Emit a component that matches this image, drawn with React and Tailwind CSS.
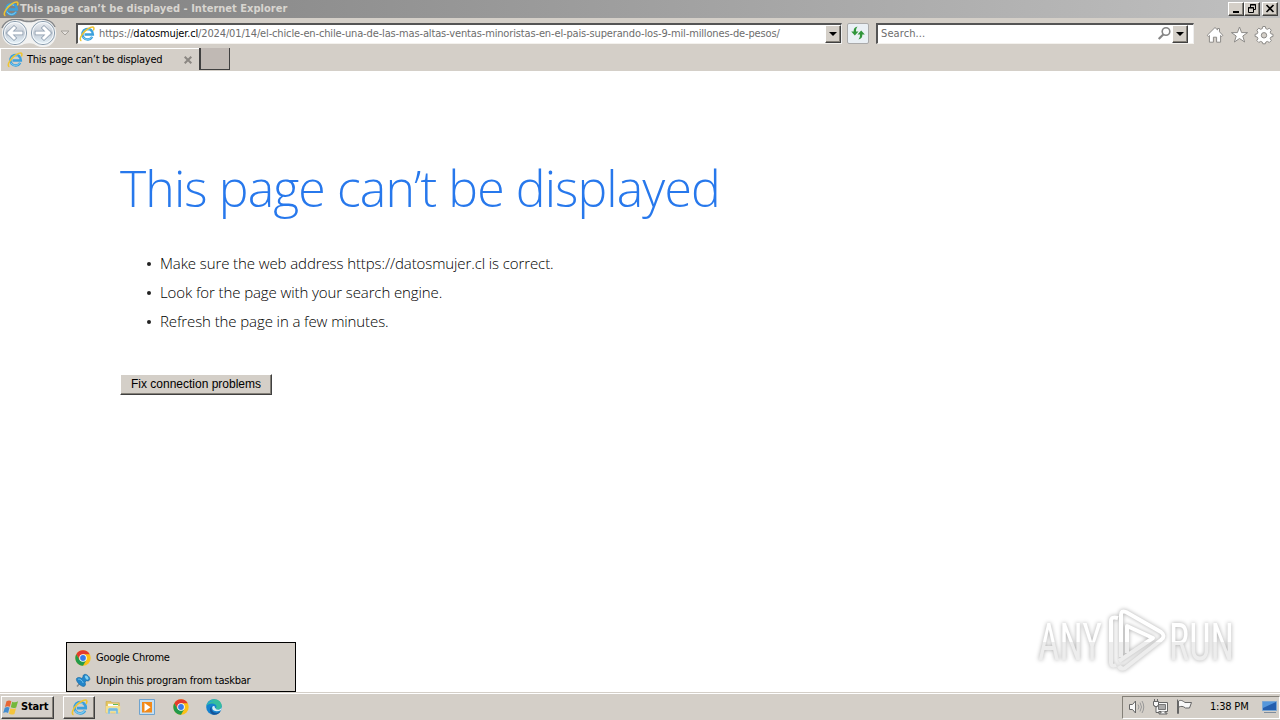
import { useState } from "react";
import clsx from "clsx";

const HOST = "datosmujer.cl";
const PATH =
  "/2024/01/14/el-chicle-en-chile-una-de-las-mas-altas-ventas-minoristas-en-el-pais-superando-los-9-mil-millones-de-pesos/";

const UI_FONT = "font-['DejaVu_Sans_Condensed','DejaVu_Sans',sans-serif] font-stretch-condensed";
const RAISED =
  "bg-[#d4cfc8] border border-t-white border-l-white border-r-[#404040] border-b-[#404040] shadow-[inset_-1px_-1px_0_#848078]";

/* ---------- Icons ---------- */

function IeIcon({ size = 16 }) {
  return (
    <svg width={size} height={size} viewBox="0 0 16 16" className="shrink-0" fill="none">
      <path d="M13.2 10.9A5.3 5.3 0 1 1 13.9 8.6H5.5" stroke="#3ba0dc" strokeWidth="2.5" />
      <path d="M12.9 10.6A4.9 4.9 0 0 1 4 10.8M4.5 6A4.8 4.8 0 0 1 11 4.4" stroke="#7fcdf3" strokeWidth="1" />
      <path
        d="M2.4 14.8C-.2 14 2 8.7 6 5.1 9.8 1.5 14.1-.1 14.8 1.7c.3.8 0 1.8-.5 2.8"
        stroke="#efc42f"
        strokeWidth="1.5"
      />
    </svg>
  );
}

function ChromeIcon() {
  return (
    <svg width="16" height="16" viewBox="0 0 16 16" className="shrink-0">
      <circle cx="8" cy="8" r="7.7" fill="#fbc116" />
      <path d="M1.3 4.2A7.7 7.7 0 0 1 14.7 4.2H8L4.7 9.9Z" fill="#e33b2e" />
      <path d="M1.3 4.2A7.7 7.7 0 0 0 8 15.7L11.3 9.9H4.7Z" fill="#229a4b" />
      <circle cx="8" cy="8" r="3.8" fill="#fff" />
      <circle cx="8" cy="8" r="2.9" fill="#397be8" />
    </svg>
  );
}

function PinIcon() {
  return (
    <svg width="16" height="16" viewBox="0 0 16 16" className="shrink-0">
      <path d="M2 13.5 6 9" stroke="#888" strokeWidth="1.5" />
      <path d="M1.5 5.5C2.8 4 5 4.2 6.6 5.3L8 4.3C7.5 1.7 9.9.5 12.1 2c2.6 1.7 3.5 4.3 2 5.5-.8.7-1.8.5-2.5.2L10 9.2c1 2.3.5 3.6-1 4.2C6 14 .4 8.2 1.5 5.5Z" fill="#2386c9" stroke="#13659f" strokeWidth=".6" />
      <ellipse cx="11.7" cy="4.6" rx="1.4" ry="2.3" transform="rotate(-40 11.7 4.6)" fill="#80d2f5" />
      <path d="M3.2 6.2c1.8-.6 4.4 1.7 5 3.8" stroke="#71c5ef" fill="none" />
    </svg>
  );
}

function ExplorerIcon() {
  return (
    <svg width="16" height="16" viewBox="0 0 16 16">
      <path d="M1 2.5h5l1 1.3h7.3v10H1Z" fill="#e6c760" stroke="#c8a84b" strokeWidth=".6" />
      <path d="M3 4.8h10v3H3Z" fill="#f8fcff" />
      <path d="M8 5.5h5" stroke="#64b75b" />
      <path d="M.8 7h14.4v6.8H.8Z" fill="#f6df89" />
      <path d="M3 15v-4.5q0-1.5 1.5-1.5h7q1.5 0 1.5 1.5V15h-2v-3H5v3Z" fill="#75b9dc" stroke="#b8dfef" strokeWidth=".5" />
    </svg>
  );
}

function MediaIcon() {
  return (
    <svg width="18" height="18" viewBox="0 0 18 18">
      <path d="M1.5 1.5h15v15h-15Z" fill="#c5dff3" stroke="#6fa3ce" />
      <path d="M4 4h10v10.5H4Z" fill="#f28a1a" />
      <path d="m6.5 5 6 4.2-6 4.2Z" fill="#fff" />
    </svg>
  );
}

function EdgeIcon() {
  return (
    <svg width="16" height="16" viewBox="0 0 16 16">
      <circle cx="8" cy="8" r="7.8" fill="#1582cf" />
      <path d="M.4 7C1.2 2.7 4.5.2 8.4.2c4.2 0 7.3 3 7.3 6.6 0 2.3-1.5 3.9-3.6 3.9-1.5 0-2.4-.6-2.4-1.2 0-.5.8-.7.8-1.9C10.5 5.8 8.6 4.4 6 4.4 3.6 4.4 1.4 5.4.4 7Z" fill="#35bd9e" />
      <path d="M.4 7C1.3 2.6 5 1 8 2.2 4.5 2 1.7 4 .4 7Z" fill="#259ee2" />
      <path d="M6 7c-1.6 2.6.2 6.3 3.4 6.8 1.9.4 3.9-.4 5.3-2-1 2.7-3.8 4.2-6.7 4C3.8 15.5 2.5 9 6 7Z" fill="#135399" />
      <path d="M9.7 9.5c-1.5-1-.5-2.4-1.7-2.6C6.7 6.7 6 8 6.3 9.4c.5 2.8 5 3.8 9 1.6L15.7 8c-.8 2-2 2.7-3.6 2.7-1.2 0-2-.4-2.4-1.2Z" fill="#d9edf3" />
    </svg>
  );
}

function WindowsFlag() {
  return (
    <svg width="18" height="17" viewBox="1 0 16 16" className="shrink-0">
      <path d="M3.8 2.2c1.7-1 3.2-.9 4.6-.2L7 7.3c-1.6-.8-3-.8-4.6.2Z" fill="#e76734" />
      <path d="M9.2 2.5c1.6.8 3.5.7 5.5-.3L13 8c-1.9.8-3.6.7-5.2-.2Z" fill="#74b83c" />
      <path d="M2.2 8.2c1.5-.9 3-.9 4.5-.1l-1.4 5.1c-1.5-.9-3-.8-4.6 0Z" fill="#438dcf" />
      <path d="M7.5 8.6c1.6.8 3.4.8 5.3.1L11.3 14c-2 .9-3.7.7-5.2-.2Z" fill="#f5c53c" />
    </svg>
  );
}

function NavArrows() {
  return (
    <svg width="58" height="28" viewBox="0 0 58 28" className="shrink-0">
      <defs>
        <linearGradient id="orb" x1="0" y1="0" x2="0" y2="1">
          <stop offset="0" stopColor="#eef0f3" />
          <stop offset=".5" stopColor="#c3cbd5" />
          <stop offset="1" stopColor="#e9f6fd" />
        </linearGradient>
      </defs>
      <path d="M3 7C7 0 17-1 24 2q5 1 10 0c8-4 18-1 21 6 3 8 0 16-6 19-6 2-11 1-15-2-3-1-6-1-10 0C13 31-2 24 3 7Z" fill="#f2f2f1" />
      <path d="M2 9C6-1 18-1 24 2q5 1 10 0c8-4 18-1 21 6" fill="none" stroke="#85878a" strokeWidth="1.4" />
      {[15, 43].map((x) => (
        <g key={x}>
          <circle cx={x} cy="14" r="11.6" fill="url(#orb)" stroke="#8b9dae" />
          <circle cx={x} cy="14" r="10.5" fill="none" stroke="#f7fbfe" />
        </g>
      ))}
      <g fill="none" strokeLinecap="square">
        <path d="M21 14H9m5-5L9 14l5 5M37 14h12m-5-5 5 5-5 5" stroke="#8b9bad" strokeWidth="4.4" />
        <path d="M21 14H9m5-5L9 14l5 5M37 14h12m-5-5 5 5-5 5" stroke="#fff" strokeWidth="3" />
      </g>
    </svg>
  );
}

function CommandIcons() {
  return (
    <svg width="70" height="20" viewBox="0 0 70 20" className="shrink-0" fill="#fff" stroke="#8d8b88" strokeWidth="1">
      <path d="M2.2 10.3 10 2.5l2.5 2.4V3.5h2v3.3l3.3 3.5-1.2 1.2-1-1v6.7h-4v-5H8.4v5h-4v-6.7l-1 1Z" />
      <path d="m34.5 2 2.1 5.6h6L37.8 11l1.8 6-5.1-3.5-5.1 3.5 1.8-6-4.8-3.4h6Z" />
      <path d="m57.3 2 .5 2.1 1.6.7 1.9-1.1 2 2-1.1 1.9.7 1.7 2.1.5V12l-2.1.5-.7 1.7 1.1 1.8-2 2-1.9-1.1-1.6.7-.5 1.7h-2.5l-.5-1.7-1.7-.7-1.8 1.1-2-2 1.1-1.8-.7-1.7-2.1-.5V9.8l2.1-.5.7-1.7-1.1-1.9 2-2 1.8 1.1 1.7-.7.5-2.1Z" transform="translate(3 -.5)" />
      <circle cx="59" cy="10.3" r="2.7" fill="#d4cfc8" />
    </svg>
  );
}

function TrayIcons() {
  return (
    <svg width="70" height="18" viewBox="0 0 70 18" className="shrink-0" fill="#f8f8f8" stroke="#666" strokeWidth="1">
      <path d="M1.5 6.5h3l3-3.5v12l-3-3.5h-3Z" />
      <path d="M10 6.5q2 2.5 0 5m2-7q3 4.500 0 9m2-10.500q3.500 6 0 12" fill="none" stroke="#999" />
      <path d="M28.500 4.500h11v9h-11Z" />
      <path d="M30.500 6.500h7v5h-7Z" fill="#aaa" stroke="#777" />
      <path d="M33 13.500v1.500h-2v1h8v-1h-2v-1.500M25.500 3.500h5v4h-1v1h-3v-1h-1ZM26.500 1v2.500m3-2.500v2.500M28 8v6.500h3" />
      <path d="M49.500 1.500v14h1V3m0 0c3-1.500 4.500.2 6.500 1.500h6.500l-2 5.500h-4c-2.500-2-4.500-2-7-.8" />
    </svg>
  );
}

/* Play mark between the two halves of the name */
function Watermark() {
  return (
    <svg
      width="210"
      height="80"
      viewBox="0 0 210 80"
      className="pointer-events-none absolute right-[38px] bottom-[36px] overflow-visible"
      style={{ filter: "drop-shadow(0 0 2px #aaa)" }}
    >
      <defs>
        <linearGradient id="wm" x1="0" y1="0" x2="0" y2="80" gradientUnits="userSpaceOnUse">
          <stop offset=".48" stopColor="#fff" />
          <stop offset=".48" stopColor="#ededed" />
        </linearGradient>
      </defs>
      <g fill="none" stroke="url(#wm)" strokeWidth="4" strokeLinejoin="round">
        <path d="M86 14Q79 12 79 17V59Q79 63 84 61" />
        <path d="M89 53V11Q89 6 94 8L129 28Q134 32 129 36L93 64Q89 66 87 62" />
        <path d="M95 49V22L121 34 87 57" />
      </g>
      <g fill="url(#wm)" fontFamily="Roboto, sans-serif" fontSize="52" fontWeight="400">
        <text x="6" y="56" textLength="64" lengthAdjust="spacingAndGlyphs">ANY</text>
        <text x="137" y="56" textLength="65" lengthAdjust="spacingAndGlyphs">RUN</text>
      </g>
    </svg>
  );
}

/* ---------- Window chrome ---------- */

function DropButton() {
  return (
    <button className={clsx("flex h-[18px] w-4 shrink-0 items-center justify-center", RAISED)}>
      <svg width="8" height="4" viewBox="0 0 8 4">
        <path d="M0 0h8L4 4Z" />
      </svg>
    </button>
  );
}

function TitleBar() {
  return (
    <div className="flex h-[18px] shrink-0 items-center bg-linear-to-r from-[#808080] to-[#c0c0c0] pr-[2px] pl-[3px]">
      <IeIcon size={16} />
      <span className="ml-px pt-px text-[11px] font-bold tracking-[0.015px] whitespace-nowrap text-[#d8d5d0]">
        This page can’t be displayed - Internet Explorer
      </span>
      <div className="ml-auto flex h-[14px]">
        <button className={clsx("h-[14px] w-4", RAISED)}>
          <svg width="14" height="12" viewBox="0 0 14 12">
            <path d="M4 8h6v2H4Z" />
          </svg>
        </button>
        <button className={clsx("h-[14px] w-4", RAISED)}>
          <svg width="14" height="12" viewBox="0 0 14 12" fill="none" stroke="#000">
            <path d="M5.5 4V1.5h5v5H8.5M5 2h6M3.5 4.5h5v5h-5ZM3 5h6" />
          </svg>
        </button>
        <button className={clsx("ml-[2px] h-[14px] w-4", RAISED)}>
          <svg width="14" height="12" viewBox="0 0 14 12" stroke="#000" strokeWidth="1.6">
            <path d="m3.5 2 7 7m0-7-7 7" />
          </svg>
        </button>
      </div>
    </div>
  );
}

function Toolbar() {
  return (
    <div className="flex h-[30px] shrink-0 items-center">
      <NavArrows />
      <svg width="10" height="6" viewBox="0 0 10 6" className="ml-[2px] shrink-0" fill="#e6e3df" stroke="#a4a09a">
        <path d="M1 1h8L5 5Z" />
      </svg>
      <div className="ml-[6px] flex h-[21px] w-[766px] shrink-0 items-center border-t-2 border-r border-b border-l-2 border-t-[#555] border-r-[#eee] border-b-[#f4f2ee] border-l-[#555] bg-white pl-px">
        <IeIcon size={16} />
        <span className="ml-1 flex-1 pt-[2px] text-[11px] tracking-[-0.142px] whitespace-nowrap text-[#6d6d6d]">
          https://<span className="text-black">{HOST}</span>
          {PATH}
        </span>
        <DropButton />
      </div>
      <button className="ml-[5px] flex h-[21px] w-[22px] shrink-0 items-center justify-center rounded-[2px] border border-[#aaa] bg-[#eaf0f5]">
        <svg width="16" height="16" viewBox="0 0 16 16" fill="#31963b">
          <path d="M7.500 1.500C4.500 2 3.500 4 3.700 6.500H1.200l3.600 4 3.700-4H6C6 4.500 6.300 3 7.500 1.500Z" />
          <path d="M8.500 14.500c3-.5 4-2.500 3.800-5h2.500l-3.600-4-3.700 4H10c0 2-.3 3.500-1.500 5Z" />
        </svg>
      </button>
      <div className="ml-[7px] flex h-[21px] w-[318px] shrink-0 items-center border-t-2 border-r border-b border-l-2 border-t-[#555] border-r-[#eee] border-b-[#f4f2ee] border-l-[#555] bg-white pr-[5px] pl-[3px]">
        <span className="flex-1 pt-[2px] text-[11px] tracking-[0.1px] text-[#6d6d6d]">Search...</span>
        <svg width="15" height="15" viewBox="0 0 15 15" fill="none" stroke="#858585">
          <circle cx="9" cy="5.500" r="3.800" strokeWidth="1.600" />
          <path d="M6.300 8.500 1.700 13" strokeWidth="2.200" />
        </svg>
        <DropButton />
      </div>
      <div className="ml-[11px] flex pt-[3px]">
        <CommandIcons />
      </div>
    </div>
  );
}

function TabBar() {
  return (
    <div className="flex h-[23px] shrink-0 items-start">
      <div className="flex h-[23px] w-[199px] items-center border-t border-l border-white pl-[6px]">
        <IeIcon size={16} />
        <span className="ml-1 pt-px text-[11px] tracking-[-0.245px] whitespace-nowrap">This page can’t be displayed</span>
        <svg width="8" height="8" viewBox="0 0 8 8" className="mr-[7px] ml-auto" stroke="#8b8782" strokeWidth="2">
          <path d="m.7.7 6.600 6.600m0-6.600L.7 7.300" />
        </svg>
      </div>
      <div className="h-[22px] w-[31px] border border-t-0 border-l-2 border-[#404040] bg-[#c0b9b4]" />
    </div>
  );
}

/* ---------- Page ---------- */

function ErrorPage() {
  const tips = [
    `Make sure the web address https://${HOST} is correct.`,
    "Look for the page with your search engine.",
    "Refresh the page in a few minutes.",
  ];

  return (
    <main className="flex-1 bg-white pl-[120px] font-['Open_Sans','Noto_Sans',sans-serif] font-light font-stretch-normal">
      <h1 className="pt-[83px] text-[50px] leading-[68px] tracking-[-0.9px] whitespace-nowrap text-[#2778ec]">
        This page can’t be displayed
      </h1>
      <ul className="mt-[27px] pl-[27px]">
        {tips.map((tip) => (
          <li key={tip} className="flex h-[29px] items-center text-[15px] tracking-[-0.1px] whitespace-nowrap text-black">
            <span className="mr-[9px] size-1 rounded-full bg-[#222]" />
            {tip}
          </li>
        ))}
      </ul>
      <button
        className={clsx(
          "mt-[38px] block h-[21px] w-[152px] font-['Liberation_Sans',sans-serif] text-xs leading-[17px] font-normal whitespace-nowrap text-black",
          RAISED
        )}
      >
        Fix connection problems
      </button>
    </main>
  );
}

/* ---------- Taskbar ---------- */

function JumpList() {
  return (
    <div className="absolute bottom-[28px] left-[66px] h-[50px] w-[230px] border border-black bg-[#d4cfc8] px-2 pt-[3px] text-[11px]">
      <div className="flex h-[23px] items-center gap-[5px]">
        <ChromeIcon />
        <span className="pt-px tracking-[-0.245px]">Google Chrome</span>
      </div>
      <div className="flex h-[23px] items-center gap-[5px]">
        <PinIcon />
        <span className="pt-px tracking-[-0.245px] whitespace-nowrap">Unpin this program from taskbar</span>
      </div>
    </div>
  );
}

function Taskbar({ onToggleList }) {
  return (
    <footer className="flex h-7 shrink-0 items-center border-t border-[#d4cfc8] shadow-[inset_0_1px_0_#fff]">
      <button className={clsx("mt-px ml-px flex h-[23px] w-[53px] items-center pl-px text-[11px] font-bold", RAISED)}>
        <WindowsFlag />
        <span className="pt-px tracking-[-0.150px]">Start</span>
      </button>
      <button className={clsx("mt-px ml-[9px] flex h-[23px] w-8 items-center justify-center", RAISED)}>
        <IeIcon size={17} />
      </button>
      <div className="mt-px ml-[10px] flex items-center gap-[17px]">
        <ExplorerIcon />
        <MediaIcon />
        <button onClick={onToggleList}>
          <ChromeIcon />
        </button>
        <EdgeIcon />
      </div>
      <div className="mt-px ml-auto flex h-[23px] w-[158px] items-center border border-t-[#848078] border-r-white border-b-white border-l-[#848078] pl-[5px]">
        <TrayIcons />
        <span className="ml-[12px] pt-px text-[11px] tracking-[-0.200px] whitespace-nowrap">1:38 PM</span>
        <svg width="18" height="14" viewBox="0 0 18 14" className="ml-auto shrink-0">
          <path d="M1.500 1.500h14v9h-14Z" fill="#245eae" stroke="#7aa6d4" />
          <path d="M2 2h13L2 8Z" fill="#5597dc" />
          <path d="M3 12.500h12" stroke="#7f8d9d" />
        </svg>
      </div>
    </footer>
  );
}

export default function App() {
  const [listOpen, setListOpen] = useState(true);

  return (
    <div className={clsx("relative flex h-[720px] w-[1280px] flex-col overflow-hidden bg-[#d4cfc8] text-black", UI_FONT)}>
      <TitleBar />
      <Toolbar />
      <TabBar />
      <ErrorPage />
      <Taskbar onToggleList={() => setListOpen((open) => !open)} />
      {listOpen && <JumpList />}
      <Watermark />
    </div>
  );
}
